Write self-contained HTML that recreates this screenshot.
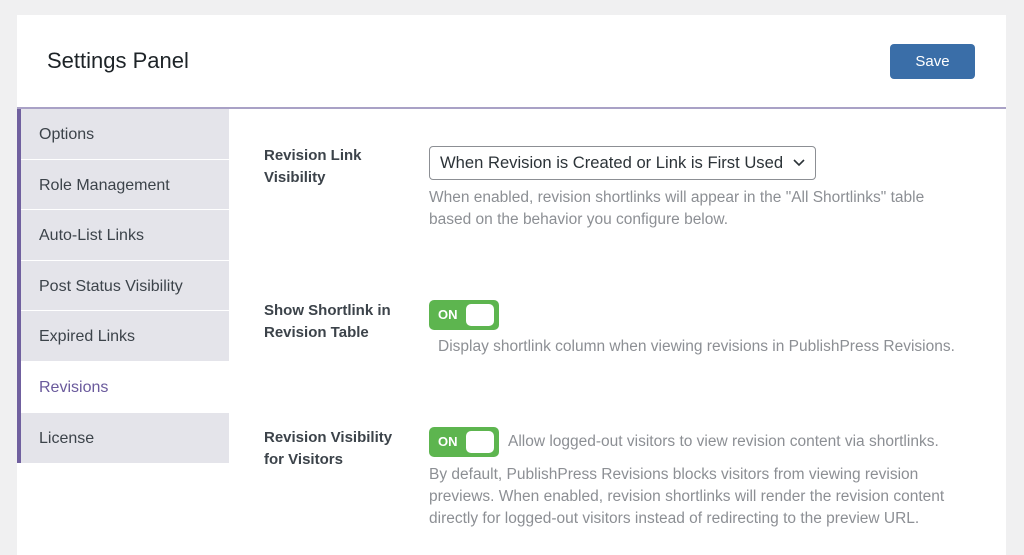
<!DOCTYPE html>
<html><head><style>
*{margin:0;padding:0;box-sizing:border-box}
body{width:1024px;height:551px;background:#f0f0f1;font-family:"Liberation Sans",sans-serif;position:relative;overflow:hidden}
.panel{position:absolute;left:17px;top:15px;width:989px;height:540px;background:#fff}
.title{position:absolute;left:30px;top:33px;font-size:22px;color:#1d2327}
.save{position:absolute;left:873px;top:29px;width:85px;height:35px;background:#3a6ea8;border-radius:4px;color:#fff;font-size:15px;text-align:center;line-height:35px}
.line{position:absolute;left:0;top:92px;width:989px;height:2px;background:#a9a1c6}
.side{position:absolute;left:17px;top:109px;width:212px;height:354px;background:#e4e4ea;border-left:4px solid #70609f}
.side div{height:50.6px;border-bottom:1px solid #fff;padding-left:18px;line-height:52px;font-size:16px;color:#3c434a}
.side .act{background:#fff;color:#6a5a9c}
.lbl{position:absolute;left:264px;font-size:15px;font-weight:bold;color:#3c434a;line-height:22px}
.desc{position:absolute;font-size:15.5px;color:#8c8f94;line-height:22px}
.sel{position:absolute;left:429px;top:146px;width:387px;height:34px;border:1px solid #8c8f94;border-radius:4px;font-size:16.6px;color:#2c3338;line-height:32px;padding-left:10px}
.tog{position:absolute;left:429px;width:70px;height:30px;background:#5db54f;border-radius:5px;color:#fff;font-size:13px;font-weight:bold;line-height:30px;padding-left:9px}
.tog i{position:absolute;right:5px;top:4px;width:28px;height:22px;background:#fff;border-radius:5px}
</style></head><body>
<div class="panel"><div class="title">Settings Panel</div><div class="save">Save</div><div class="line"></div></div>
<div class="side"><div>Options</div><div>Role Management</div><div>Auto-List Links</div><div>Post Status Visibility</div><div>Expired Links</div><div class="act">Revisions</div><div style="border:0">License</div></div>
<div class="lbl" style="top:145px">Revision Link<br>Visibility</div>
<div class="sel">When Revision is Created or Link is First Used<svg style="position:absolute;right:10px;top:12px" width="12" height="8"><path d="M1 1l5 5 5-5" stroke="#2c3338" stroke-width="1.6" fill="none"/></svg></div>
<div class="desc" style="left:429px;top:187px">When enabled, revision shortlinks will appear in the "All Shortlinks" table<br>based on the behavior you configure below.</div>
<div class="lbl" style="top:300px">Show Shortlink in<br>Revision Table</div>
<div class="tog" style="top:300px">ON<i></i></div>
<div class="desc" style="left:438px;top:336px">Display shortlink column when viewing revisions in PublishPress Revisions.</div>
<div class="lbl" style="top:427px">Revision Visibility<br>for Visitors</div>
<div class="tog" style="top:427px">ON<i></i></div>
<div class="desc" style="left:508px;top:431px">Allow logged-out visitors to view revision content via shortlinks.</div>
<div class="desc" style="left:429px;top:464px">By default, PublishPress Revisions blocks visitors from viewing revision<br>previews. When enabled, revision shortlinks will render the revision content<br>directly for logged-out visitors instead of redirecting to the preview URL.</div>
</body></html>
